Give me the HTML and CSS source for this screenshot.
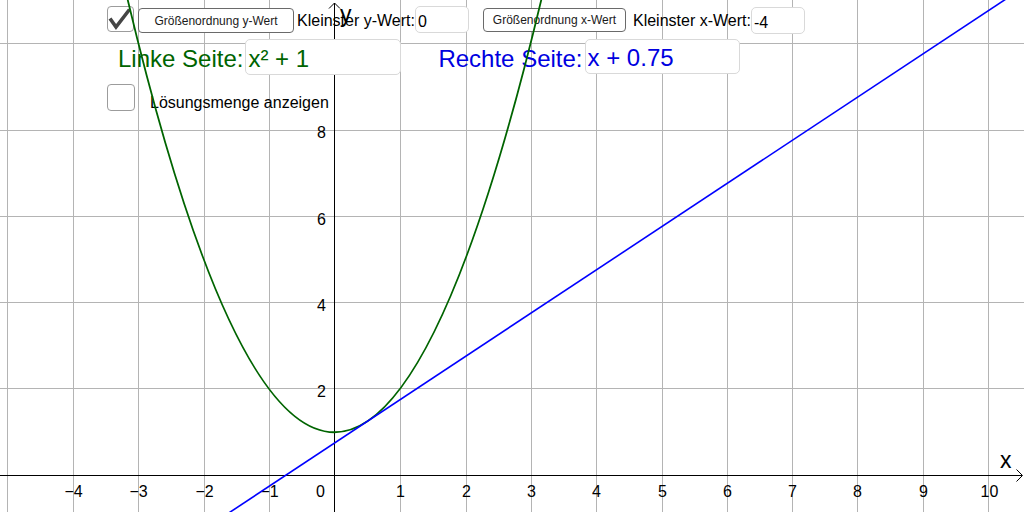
FILE: index.html
```html
<!DOCTYPE html>
<html lang="de">
<head>
<meta charset="utf-8">
<title>Gleichung grafisch lösen</title>
<link rel="stylesheet" href="styles.css">
</head>
<body>
<div class="applet">
  <svg class="plane" width="1024" height="512" viewBox="0 0 1024 512">
    <path class="grid" d="M7.5 0V512M73.5 0V512M138.5 0V512M204.5 0V512M269.5 0V512M400.5 0V512M466.5 0V512M531.5 0V512M596.5 0V512M662.5 0V512M727.5 0V512M792.5 0V512M857.5 0V512M923.5 0V512M988.5 0V512M0 43.5H1024M0 130.5H1024M0 216.5H1024M0 302.5H1024M0 388.5H1024"/>
    <path class="axis" d="M0 475.5H1022M1016.5 469.5L1022.5 475.5L1016.5 481.5M334.5 512V3M329 8.5L334.5 3L340 8.5"/>
    <g class="num">
      <text x="73.5" y="497" text-anchor="middle">−4</text>
      <text x="138.5" y="497" text-anchor="middle">−3</text>
      <text x="204.5" y="497" text-anchor="middle">−2</text>
      <text x="269.5" y="497" text-anchor="middle">−1</text>
      <text x="320.5" y="497" text-anchor="middle">0</text>
      <text x="400.5" y="497" text-anchor="middle">1</text>
      <text x="466.5" y="497" text-anchor="middle">2</text>
      <text x="531.5" y="497" text-anchor="middle">3</text>
      <text x="596.5" y="497" text-anchor="middle">4</text>
      <text x="662.5" y="497" text-anchor="middle">5</text>
      <text x="727.5" y="497" text-anchor="middle">6</text>
      <text x="792.5" y="497" text-anchor="middle">7</text>
      <text x="857.5" y="497" text-anchor="middle">8</text>
      <text x="923.5" y="497" text-anchor="middle">9</text>
      <text x="989.5" y="497" text-anchor="middle">10</text>
      <text x="326" y="397" text-anchor="end">2</text>
      <text x="326" y="311" text-anchor="end">4</text>
      <text x="326" y="225" text-anchor="end">6</text>
      <text x="326" y="138" text-anchor="end">8</text>
      <text x="326" y="51" text-anchor="end">10</text>
    </g>
    <text class="axis-name" x="340" y="22">y</text>
    <text class="axis-name" x="1000" y="468">x</text>
  </svg>

  <div class="controls">
    <div class="row row-top">
      <span class="check check-top">
        <svg class="tick" width="27" height="26" viewBox="0 0 27 26"><path d="M3 12.5L9 21L22.5 3.5"/></svg>
      </span>
      <button class="btn btn-y" type="button">Größenordnung y-Wert</button>
      <span class="lbl lbl-top">Kleinster y-Wert:</span>
      <input class="field field-small field-y" type="text" value="0">
      <button class="btn btn-x" type="button">Größenordnung x-Wert</button>
      <span class="lbl lbl-top lbl-x">Kleinster x-Wert:</span>
      <input class="field field-small field-x" type="text" value="-4">
    </div>
    <div class="row row-eq">
      <span class="eq-lbl green">Linke Seite:</span>
      <input class="field field-eq green" type="text" value="x² + 1">
      <span class="eq-lbl eq-lbl-right blue">Rechte Seite:</span>
      <input class="field field-eq field-eq-right blue" type="text" value="x + 0.75">
    </div>
    <div class="row row-sol">
      <span class="check check-sol"></span>
      <span class="lbl lbl-sol">Lösungsmenge anzeigen</span>
    </div>
  </div>

  <svg class="curves" width="1024" height="512" viewBox="0 0 1024 512">
    <path class="parabola" d="M118.68 -38.74Q334.5 903.24 550.32 -38.74"/>
    <path class="line" d="M203.7 529.56L1034.28 -19.7"/>
  </svg>
</div>
</body>
</html>
```

FILE: styles.css
```css
html, body {
  margin: 0;
  padding: 0;
  background: #ffffff;
}

.applet {
  position: relative;
  width: 1024px;
  height: 512px;
  overflow: hidden;
  background: #ffffff;
  font-family: "Liberation Sans", Arial, sans-serif;
  color: #000000;
}

.plane {
  position: absolute;
  top: 0;
  left: 0;
  display: block;
}

.grid {
  fill: none;
  stroke: #b4b4b4;
  stroke-width: 1;
}

.axis {
  fill: none;
  stroke: #000000;
  stroke-width: 1;
}

.num text {
  font-family: "Liberation Sans", Arial, sans-serif;
  font-size: 16px;
  fill: #000000;
}

.axis-name {
  font-family: "Liberation Sans", Arial, sans-serif;
  font-size: 23px;
  fill: #000000;
}

.controls {
  position: absolute;
  top: 0;
  left: 0;
  width: 100%;
  height: 100%;
  display: flex;
  flex-direction: column;
}

.row {
  display: flex;
  align-items: flex-start;
}

.row-top {
  height: 39px;
  margin-left: 107px;
}

.row-eq {
  height: 45px;
  margin-left: 118px;
}

.row-sol {
  margin-left: 107px;
}

.check {
  box-sizing: border-box;
  display: block;
  border: 1.5px solid #9c9c9c;
  border-radius: 4px;
  background: #ffffff;
}

.check-top {
  width: 27px;
  height: 26px;
  margin-top: 6px;
}

.check-sol {
  width: 28px;
  height: 27px;
}

.tick {
  display: block;
  margin: -1.5px 0 0 -1.5px;
  overflow: visible;
}

.tick path {
  fill: none;
  stroke: #454545;
  stroke-width: 3.6;
  stroke-linejoin: miter;
}

.btn {
  box-sizing: border-box;
  height: 25px;
  margin-top: 8px;
  padding: 0;
  border: 1.5px solid #6a6a6a;
  border-radius: 4px;
  background: #ffffff;
  font-family: "Liberation Sans", Arial, sans-serif;
  font-size: 12px;
  color: #1a1a1a;
  text-align: center;
}

.btn-y {
  width: 156px;
  margin-left: 4px;
}

.btn-x {
  width: 143px;
  height: 24px;
  margin-left: 14px;
}

.lbl {
  font-size: 16px;
  line-height: 18px;
  white-space: nowrap;
}

.lbl-top {
  margin-top: 12px;
  margin-left: 3px;
}

.lbl-x {
  margin-left: 7px;
}

.lbl-sol {
  margin-left: 15px;
  margin-top: 9.5px;
}

.field {
  position: relative;
  z-index: 3;
  box-sizing: border-box;
  margin: 0;
  border: 1px solid #d9d9d9;
  border-radius: 5px;
  background: #ffffff;
  font-family: "Liberation Sans", Arial, sans-serif;
  color: #000000;
  outline: none;
}

.field-small {
  width: 54px;
  height: 27px;
  padding: 4px 2px 0 2px;
  font-size: 16px;
}

.field-y {
  margin-top: 6px;
}

.field-x {
  margin-top: 7px;
}

.eq-lbl {
  font-size: 24px;
  line-height: 28px;
  margin-top: 6px;
  white-space: nowrap;
}

.eq-lbl-right {
  margin-left: 37px;
}

.field-eq {
  width: 156px;
  height: 36px;
  margin-left: 2px;
  padding: 3px 2px 0 2px;
  font-size: 24px;
}

.field-eq-right {
  width: 155px;
  height: 35px;
}

.green {
  color: #006400;
}

.blue {
  color: #0000e0;
}

.curves {
  position: absolute;
  top: 0;
  left: 0;
  z-index: 2;
  display: block;
  pointer-events: none;
}

.parabola {
  fill: none;
  stroke: #006400;
  stroke-width: 1.8;
}

.line {
  fill: none;
  stroke: #0000ff;
  stroke-width: 1.6;
}
```
